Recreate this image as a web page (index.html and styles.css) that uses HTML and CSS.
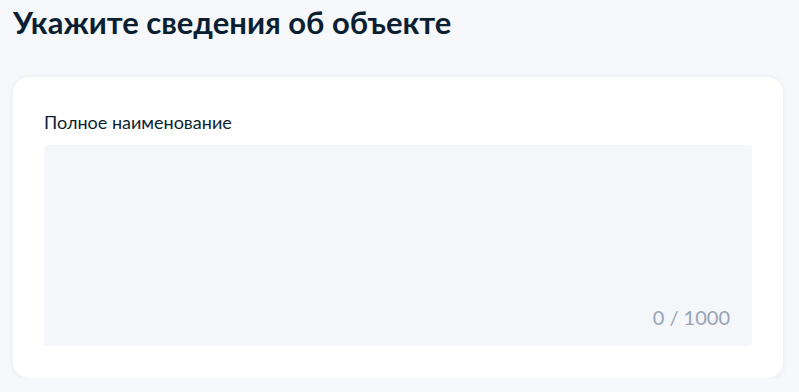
FILE: index.html
```html
<!DOCTYPE html>
<html lang="ru">
<head>
<meta charset="utf-8">
<link rel="stylesheet" href="styles.css">
</head>
<body>
<main class="page">
  <h1 class="title">Укажите сведения об объекте</h1>
  <section class="card">
    <label class="label" for="fullname">Полное наименование</label>
    <div class="field">
      <textarea id="fullname" class="textarea"></textarea>
      <span class="counter">0 / 1000</span>
    </div>
  </section>
</main>
</body>
</html>
```
FILE: styles.css
```css
html, body {
  margin: 0;
  padding: 0;
  background: #f7f8fb;
  font-family: Lato, "Noto Sans", sans-serif;
  color: #0b1f33;
}
.page {
  padding: 0 16px 0 13px;
}
.title {
  margin: 0;
  padding-top: 2px;
  font-size: 31px;
  line-height: 40px;
  font-weight: 700;
  color: #0b1f33;
}
.card {
  margin-top: 35px;
  width: 770px;
  box-sizing: border-box;
  background: #fff;
  border-radius: 16px;
  box-shadow: 0 1px 6px rgba(40, 60, 110, 0.08);
  padding: 32px 31px 32px;
}
.label {
  display: block;
  font-size: 18px;
  line-height: 26px;
  margin-bottom: 10px;
  color: #0b1f33;
}
.field {
  position: relative;
  height: 201px;
  background: #f5f6fa;
  border-radius: 4px;
}
.textarea {
  display: block;
  width: 100%;
  height: 100%;
  box-sizing: border-box;
  border: none;
  background: transparent;
  resize: none;
  outline: none;
  font: inherit;
  padding: 16px;
}
.counter {
  position: absolute;
  right: 22px;
  bottom: 17px;
  font-size: 20px;
  line-height: 24px;
  color: #98a3b7;
}
```
